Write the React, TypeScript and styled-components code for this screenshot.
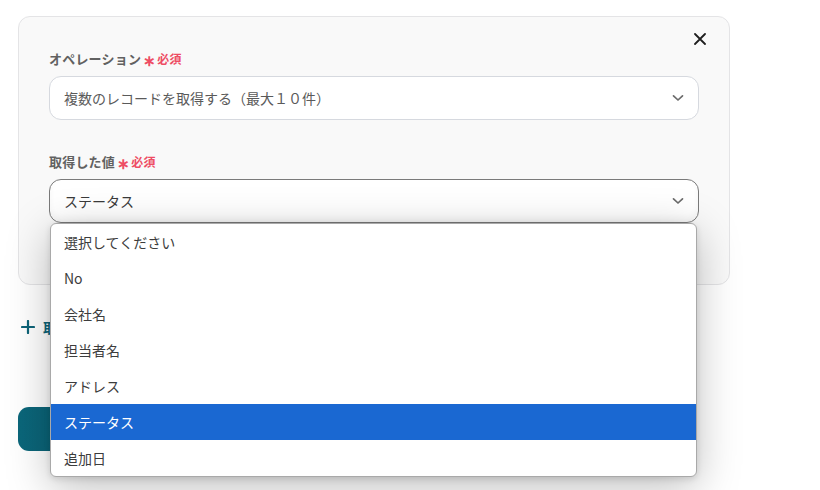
import React from "react";
import styled, { createGlobalStyle } from "styled-components";

const Global = createGlobalStyle`
  html, body { margin: 0; padding: 0; background: #ffffff; }
  body { font-family: "Noto Sans CJK JP", "Noto Sans", sans-serif; }
  * { box-sizing: border-box; }
`;

const Page = styled.div`
  padding: 16px 18px;
  width: 820px;
  height: 490px;
  overflow: hidden;
`;

const Card = styled.div`
  position: relative;
  width: 712px;
  background: #f9f9f9;
  border: 1px solid #e4e4e6;
  border-radius: 12px;
  padding: 31px 31px 61px 30px;
`;

const CloseButton = styled.button`
  position: absolute;
  top: 12px;
  right: 19px;
  width: 20px;
  height: 20px;
  border: none;
  background: transparent;
  padding: 0;
  display: flex;
  align-items: center;
  justify-content: center;
`;

const Field = styled.div<{ $gap?: number }>`
  margin-top: ${(p) => p.$gap ?? 0}px;
`;

const Label = styled.div`
  display: flex;
  align-items: center;
  height: 20px;
  margin-bottom: 8px;
  font-size: 13px;
  font-weight: 700;
  color: #616161;
  letter-spacing: 0.2px;
`;

const Required = styled.span`
  color: #ee4d64;
  font-size: 12px;
  font-weight: 700;
  margin-left: 2px;
  display: flex;
  align-items: center;
`;

const Star = styled.span`
  font-size: 15px;
  margin-right: 1px;
  line-height: 1;
  position: relative;
  top: 1px;
`;

const SelectWrap = styled.div`
  position: relative;
`;

const SelectBox = styled.div<{ $focused?: boolean }>`
  height: 44px;
  width: 650px;
  background: #ffffff;
  border: 1px solid ${(p) => (p.$focused ? "#7a7a7a" : "#d6d9df")};
  border-radius: 12px;
  display: flex;
  align-items: center;
  justify-content: space-between;
  padding: 0 14px 0 14px;
  font-size: 14px;
  color: ${(p) => (p.$focused ? "#3a3a3a" : "#5a5a5a")};
  box-shadow: ${(p) => (p.$focused ? "inset 0 -4px 6px rgba(0,0,0,0.04)" : "none")};
`;

const Dropdown = styled.ul`
  position: absolute;
  left: 1px;
  right: 1px;
  top: 100%;
  margin: 0;
  padding: 0;
  list-style: none;
  background: #ffffff;
  border: 1px solid #a9a9a9;
  border-radius: 6px;
  overflow: hidden;
  z-index: 10;
  box-shadow: 0 10px 44px rgba(0, 0, 0, 0.26), 0 2px 6px rgba(0, 0, 0, 0.12);
`;

const Option = styled.li<{ $active?: boolean }>`
  height: 36px;
  display: flex;
  align-items: center;
  padding-left: 13px;
  font-size: 14px;
  color: ${(p) => (p.$active ? "#ffffff" : "#3c3c3c")};
  background: ${(p) => (p.$active ? "#1a68d2" : "transparent")};
`;

const AddRow = styled.div`
  display: flex;
  align-items: center;
  gap: 8px;
  margin-top: 32px;
  margin-left: 3px;
  height: 20px;
  color: #0d6479;
  font-size: 14px;
  font-weight: 700;
`;

const PrimaryButton = styled.button`
  display: block;
  margin-top: 70px;
  width: 180px;
  height: 44px;
  border: none;
  border-radius: 11px;
  background: linear-gradient(90deg, #0b667a, #095e72);
`;

const Chevron = () => (
  <svg width="12" height="8" viewBox="0 0 12 8" fill="none">
    <path d="M1.5 1.8 L6 6 L10.5 1.8" stroke="#6b6b6b" strokeWidth="1.7" strokeLinecap="round" strokeLinejoin="round" />
  </svg>
);

const CloseIcon = () => (
  <svg width="12" height="12" viewBox="0 0 12 12" fill="none">
    <path d="M1 1 L11 11 M11 1 L1 11" stroke="#1f1f1f" strokeWidth="1.8" strokeLinecap="round" />
  </svg>
);

const PlusIcon = () => (
  <svg width="14" height="14" viewBox="0 0 14 14" fill="none">
    <path d="M7 1 V13 M1 7 H13" stroke="#0d6479" strokeWidth="2.2" strokeLinecap="round" />
  </svg>
);

const options = ["選択してください", "No", "会社名", "担当者名", "アドレス", "ステータス", "追加日"];

export default function App() {
  return (
    <>
      <Global />
      <Page>
        <Card>
          <CloseButton aria-label="close">
            <CloseIcon />
          </CloseButton>
          <Field>
            <Label>
              オペレーション
              <Required>
                <Star>∗</Star>必須
              </Required>
            </Label>
            <SelectBox>
              <span>複数のレコードを取得する（最大１０件）</span>
              <Chevron />
            </SelectBox>
          </Field>
          <Field $gap={31}>
            <Label>
              取得した値
              <Required>
                <Star>∗</Star>必須
              </Required>
            </Label>
            <SelectWrap>
              <SelectBox $focused>
                <span>ステータス</span>
                <Chevron />
              </SelectBox>
              <Dropdown>
                {options.map((o) => (
                  <Option key={o} $active={o === "ステータス"}>
                    {o}
                  </Option>
                ))}
              </Dropdown>
            </SelectWrap>
          </Field>
        </Card>
        <AddRow>
          <PlusIcon />
          取得する値を追加
        </AddRow>
        <PrimaryButton aria-label="次へ" />
      </Page>
    </>
  );
}
